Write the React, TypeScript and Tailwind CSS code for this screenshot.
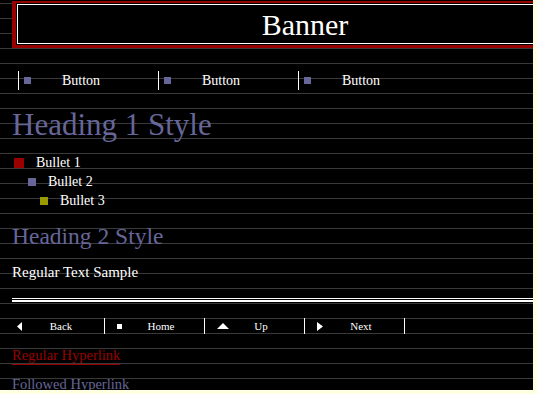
import React from 'react';

const navItems = [
  { label: 'Back', icon: 'back' },
  { label: 'Home', icon: 'home' },
  { label: 'Up', icon: 'up' },
  { label: 'Next', icon: 'next' },
];

const NavIcon = ({ kind }: { kind: string }) => {
  if (kind === 'back') {
    return (
      <svg width="6" height="9" viewBox="0 0 6 9" className="block">
        <polygon points="5,0 5,9 0,4.5" fill="#fff" />
      </svg>
    );
  }
  if (kind === 'next') {
    return (
      <svg width="6" height="9" viewBox="0 0 6 9" className="block">
        <polygon points="0,0 0,9 6,4.5" fill="#fff" />
      </svg>
    );
  }
  if (kind === 'up') {
    return (
      <svg width="12" height="6" viewBox="0 0 12 6" className="block">
        <polygon points="0,6 12,6 6,0" fill="#fff" />
      </svg>
    );
  }
  return <div className="w-[5px] h-[5px] bg-white" />;
};

const App = () => {
  return (
    <div className="w-[537px] h-[394px] bg-[#ffffe1] overflow-hidden">
      <div className="w-[533px] h-[390px] overflow-hidden bg-black bg-[linear-gradient(to_bottom,#393939_1px,transparent_1px)] bg-[length:100%_15px] bg-[position:0_3px] text-white font-['Liberation_Serif']">
        {/* banner */}
        <div className="mt-[1px] ml-[12px] w-[582px] h-[47px] bg-[#990000] pt-[2px] pl-[4px] pb-[3px]">
          <div className="h-full bg-black p-[1px]">
            <div className="h-full border border-white flex items-center justify-center">
              <span className="text-[30px] leading-none mt-[1px]">Banner</span>
            </div>
          </div>
        </div>

        {/* top buttons */}
        <div className="flex mt-[23px] ml-[18px] h-[19px]">
          {[0, 1, 2].map((i) => (
            <div key={i} className="w-[140px] flex items-center border-l border-white pl-[5px]">
              <div className="w-[7px] h-[7px] bg-[#666699]" />
              <span className="ml-[31px] text-[14px] leading-[19px]">Button</span>
            </div>
          ))}
        </div>

        <h1 className="mt-[19px] ml-[12px] text-[31px] leading-[31px] text-[#666699]">Heading 1 Style</h1>

        <ul className="mt-[13px] text-[14px]">
          <li className="flex items-center h-[19px] pl-[14px]">
            <div className="w-[10px] h-[10px] bg-[#990000]" />
            <span className="ml-[12px] leading-[19px]">Bullet 1</span>
          </li>
          <li className="flex items-center h-[19px] pl-[28px]">
            <div className="w-[8px] h-[8px] bg-[#666699]" />
            <span className="ml-[12px] leading-[19px]">Bullet 2</span>
          </li>
          <li className="flex items-center h-[19px] pl-[40px]">
            <div className="w-[8px] h-[8px] bg-[#999900]" />
            <span className="ml-[12px] leading-[19px]">Bullet 3</span>
          </li>
        </ul>

        <h2 className="mt-[14px] ml-[12px] text-[23.5px] leading-[24px] text-[#666699]">Heading 2 Style</h2>

        <p className="mt-[15px] ml-[12px] text-[15px] leading-[18px]">Regular Text Sample</p>

        {/* double rule */}
        <div className="mt-[17px] ml-[12px]">
          <div className="h-[1px] bg-white" />
          <div className="h-[1px]" />
          <div className="h-[2px] bg-white" />
        </div>

        {/* nav bar */}
        <div className="flex mt-[16px] ml-[5px] h-[16px]">
          {navItems.map((item) => (
            <div key={item.label} className="w-[100px] flex items-center border-r border-white">
              <div className="w-[24px] pl-[12px] flex items-center">
                <NavIcon kind={item.icon} />
              </div>
              <span className="w-[64px] text-center text-[11px] leading-[16px]">{item.label}</span>
            </div>
          ))}
        </div>

        <div className="mt-[14px] ml-[12px] flex flex-col items-start text-[14.5px] leading-[15px]">
          <a href="#" className="text-[#990000] border-b border-[#990000] pb-[1px]">Regular Hyperlink</a>
          <a href="#" className="mt-[12px] text-[#666699] border-b border-[#666699] pb-[1px]">Followed Hyperlink</a>
        </div>
      </div>
    </div>
  );
};

export default App;
